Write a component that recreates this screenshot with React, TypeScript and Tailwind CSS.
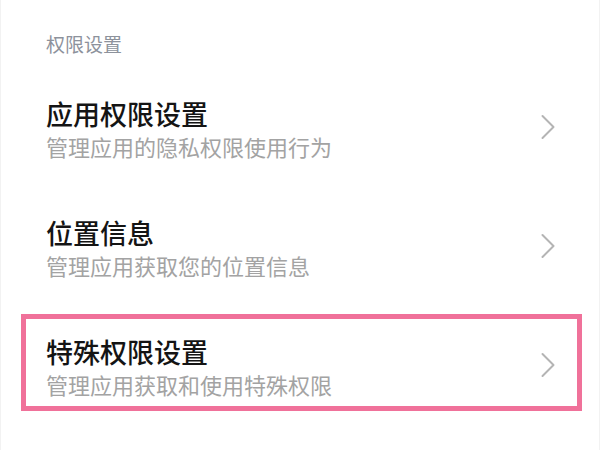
import { ChevronRight } from 'lucide-react';

const items = [
  { title: '应用权限设置', desc: '管理应用的隐私权限使用行为' },
  { title: '位置信息', desc: '管理应用获取您的位置信息' },
  { title: '特殊权限设置', desc: '管理应用获取和使用特殊权限', highlight: true },
];

function Row({ title, desc, highlight }: { title: string; desc: string; highlight?: boolean }) {
  return (
    <div className="relative flex h-[119px] items-center pl-[45px] pr-[29px]">
      <div className="flex-1">
        <div className="text-[27px] leading-[35px] font-medium text-[#141414]">{title}</div>
        <div className="text-[22px] leading-[30px] text-[#a3a3a3]">{desc}</div>
      </div>
      <ChevronRight className="-mt-[3px] h-[44px] w-[44px] text-[#b4b4b4]" strokeWidth={1.1} />
      {highlight && (
        <div className="pointer-events-none absolute left-[20px] right-[17px] top-[7px] h-[97px] border-[5px] border-[#f0719a]" />
      )}
    </div>
  );
}

export default function App() {
  return (
    <div
      className="h-[450px] w-[600px] overflow-hidden border-x border-[#f2f2f2] bg-white"
      style={{ fontFamily: '"Noto Sans CJK SC", "Noto Sans", sans-serif' }}
    >
      <div className="h-[69px] pl-[45px] pt-[30px] text-[19px] leading-[27px] text-[#8d929c]">权限设置</div>
      {items.map((it) => (
        <Row key={it.title} {...it} />
      ))}
    </div>
  );
}
